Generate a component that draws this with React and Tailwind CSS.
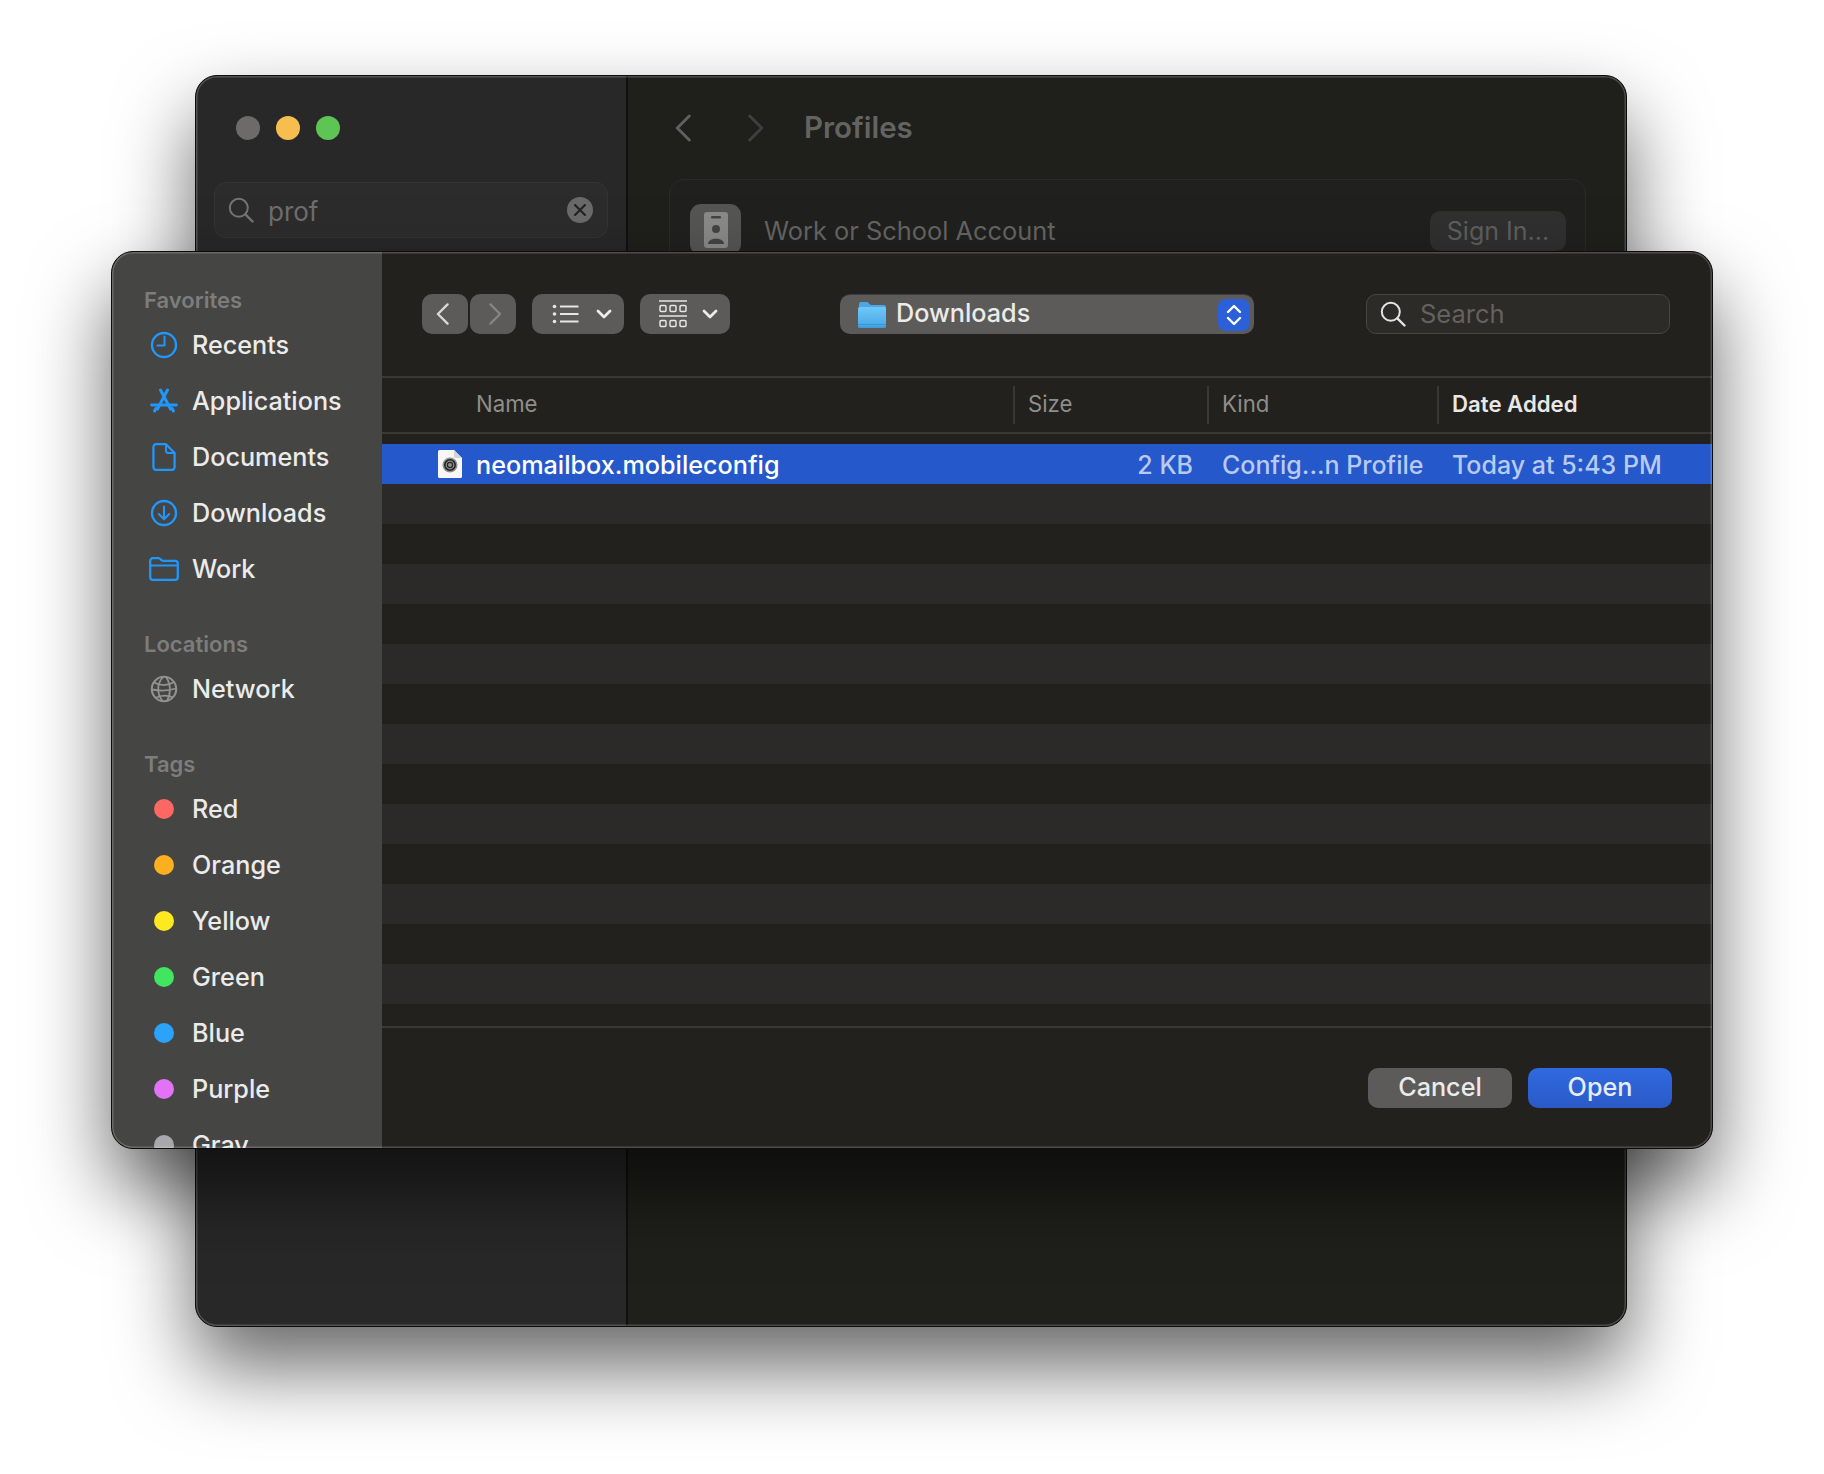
import React from "react";

const FONT = "font-['Inter','Liberation_Sans',sans-serif]";

const Chevron = ({ dir = "left", color = "#d9d9d7", w = 14, h = 24, sw = 2.4, className = "" }) => (
  <svg width={w} height={h} viewBox="0 0 14 24" fill="none" className={className}>
    <path d={dir === "left" ? "M12.5 1.5 L2 12 L12.5 22.5" : "M1.5 1.5 L12 12 L1.5 22.5"} stroke={color} strokeWidth={sw} strokeLinecap="round" strokeLinejoin="round" />
  </svg>
);

const Caret = () => (
  <svg width="16" height="10" viewBox="0 0 16 10" fill="none">
    <path d="M2 2 L8 8 L14 2" stroke="#ececeb" strokeWidth="2.8" strokeLinecap="round" strokeLinejoin="round" />
  </svg>
);

const SearchGlyph = ({ color, size = 26 }) => (
  <svg width={size} height={size} viewBox="0 0 26 26" fill="none">
    <circle cx="10.8" cy="10.8" r="9" stroke={color} strokeWidth="2" />
    <path d="M17.4 17.4 L24.5 24.5" stroke={color} strokeWidth="2.4" strokeLinecap="round" />
  </svg>
);

const BLUE = "#2196fb";

const Recents = () => (
  <svg width="28" height="28" viewBox="0 0 28 28" fill="none">
    <circle cx="14" cy="14" r="12" stroke={BLUE} strokeWidth="2.4" />
    <path d="M14.5 5.5 V14.5 H7.5" stroke={BLUE} strokeWidth="2" strokeLinecap="round" strokeLinejoin="round" />
  </svg>
);
const Apps = () => (
  <svg width="28" height="26" viewBox="0 0 28 26" fill="none">
    <path d="M10.5 2 L20.5 21" stroke={BLUE} strokeWidth="3" strokeLinecap="round" />
    <path d="M17.5 2 L7.5 21" stroke={BLUE} strokeWidth="3" strokeLinecap="round" />
    <path d="M1.5 17 H26.5" stroke={BLUE} strokeWidth="2.8" strokeLinecap="round" />
    <path d="M4.6 22.8 L6 20.5 M23.4 22.8 L22 20.5" stroke={BLUE} strokeWidth="3.2" strokeLinecap="round" />
  </svg>
);
const Docs = () => (
  <svg width="24" height="28" viewBox="0 0 24 28" fill="none">
    <path d="M5 1.2 H14 L22.6 10 V24 A3 3 0 0 1 19.6 27 H4.4 A3 3 0 0 1 1.4 24 V4.4 A3 3 0 0 1 5 1.2 Z" stroke={BLUE} strokeWidth="2.3" strokeLinejoin="round" />
    <path d="M14 1.5 V7.5 A2.5 2.5 0 0 0 16.5 10 H22.4" stroke={BLUE} strokeWidth="2" />
  </svg>
);
const Down = () => (
  <svg width="28" height="28" viewBox="0 0 28 28" fill="none">
    <circle cx="14" cy="14" r="12" stroke={BLUE} strokeWidth="2.4" />
    <path d="M14 7.5 V20 M8.8 15 L14 20.2 L19.2 15" stroke={BLUE} strokeWidth="2.1" strokeLinecap="round" strokeLinejoin="round" />
  </svg>
);
const FolderLine = () => (
  <svg width="30" height="24" viewBox="0 0 30 24" fill="none">
    <path d="M1.2 20 V3.8 A2.6 2.6 0 0 1 3.8 1.2 H9.8 C11.4 1.2 12 3.8 14 3.8 H26 A2.8 2.8 0 0 1 28.8 6.6 V20 A2.8 2.8 0 0 1 26 22.8 H4 A2.8 2.8 0 0 1 1.2 20 Z" stroke={BLUE} strokeWidth="2.3" />
    <path d="M1.2 8.5 H28.8" stroke={BLUE} strokeWidth="2" />
  </svg>
);
const Globe = () => (
  <svg width="28" height="28" viewBox="0 0 28 28" fill="none" stroke="#929291" strokeWidth="1.8">
    <circle cx="14" cy="14" r="12.2" strokeWidth="2.1" />
    <path d="M4 7.5 C10 11 18 11 24 7" />
    <path d="M1.8 14.5 C9 16 18 16 26 13.5" />
    <path d="M5 23 C11 20 18 20 23.5 22.5" />
    <path d="M13 2 C6.5 9 7 19 12.5 26" />
    <path d="M16 2 C21 9 21 19 17 26" />
  </svg>
);

const FileDoc = () => (
  <svg width="24" height="28" viewBox="0 0 24 28">
    <path d="M1.5 0 H16 L24 8 V26.5 A1.5 1.5 0 0 1 22.5 28 H1.5 A1.5 1.5 0 0 1 0 26.5 V1.5 A1.5 1.5 0 0 1 1.5 0 Z" fill="#f7f7f7" />
    <path d="M16 0 L24 8 H17.5 A1.5 1.5 0 0 1 16 6.5 Z" fill="#d4d4d4" />
    <circle cx="12" cy="15" r="7.5" fill="#8f8f8f" />
    <circle cx="12" cy="15" r="5.2" fill="none" stroke="#262626" strokeWidth="1.6" />
    <circle cx="12" cy="15" r="2.6" fill="none" stroke="#262626" strokeWidth="1.2" />
  </svg>
);

const BlueFolder = () => (
  <svg width="28" height="26" viewBox="0 0 28 26">
    <defs>
      <linearGradient id="fg" x1="0" y1="0" x2="0" y2="1">
        <stop offset="0" stopColor="#6fc8f7" />
        <stop offset="1" stopColor="#46a6e6" />
      </linearGradient>
    </defs>
    <path d="M1 6 V2 A2 2 0 0 1 3 0 H9 C11 0 11 3 13.5 3 H26 A2 2 0 0 1 28 5 V8 H0 Z" fill="#4aa8ea" />
    <rect x="0" y="5" width="28" height="21" rx="2" fill="url(#fg)" />
    <rect x="0" y="22" width="28" height="1" fill="#3a93d4" />
    <rect x="0" y="24.5" width="28" height="1" fill="#3a93d4" />
  </svg>
);

const Tool = ({ className = "", children }) => (
  <div className={`h-10 rounded-[10px] bg-[#5c5b59] flex items-center ${className}`}>{children}</div>
);

const Section = ({ label, className = "", gap, children }) => (
  <div className={className}>
    <div className={`h-6 -ml-px flex items-center text-[22px] font-semibold text-[#7d7d7c] ${gap}`}>{label}</div>
    {children}
  </div>
);

const Row = ({ icon, label }) => (
  <div className="h-14 flex items-center">
    <div className="w-[38px] flex items-center justify-center shrink-0">{icon}</div>
    <span className="ml-[9px] pt-[2px] text-[25.2px] font-[450] text-[#ebebea]">{label}</span>
  </div>
);

const Dot = ({ color }) => (
  <span className="block w-5 h-5 rounded-full" style={{ background: color }} />
);

const tags = [
  ["Red", "#fe6763"],
  ["Orange", "#fdaf1f"],
  ["Yellow", "#fde91f"],
  ["Green", "#41e55f"],
  ["Blue", "#2ba3fd"],
  ["Purple", "#e273f6"],
  ["Gray", "#a8a8ac"],
];

const Rim = () => (
  <div className="absolute inset-0 rounded-[21px] pointer-events-none shadow-[inset_0_0_0_1.5px_rgba(255,255,255,0.2)]" />
);

export default function App() {
  return (
    <div className={`relative w-[1824px] h-[1474px] bg-white overflow-hidden ${FONT}`}>
      {/* Back window */}
      <div className="absolute left-[195px] top-[75px] w-[1432px] h-[1252px] rounded-[22px] border border-[#0c0c0c] bg-[#1f1f1b] shadow-[0_40px_80px_rgba(0,0,0,0.6)]">
        <div className="relative h-full w-full flex overflow-hidden rounded-[21px]">
          <div className="w-[432px] h-full bg-[#282828] border-r-2 border-[#101010] shrink-0">
            <div className="flex gap-4 pl-10 pt-10">
              <span className="block w-6 h-6 rounded-full bg-[#6c6b6a]" />
              <span className="block w-6 h-6 rounded-full bg-[#f5be4f]" />
              <span className="block w-6 h-6 rounded-full bg-[#5ec454]" />
            </div>
            <div className="ml-[18px] mt-[42px] w-[394px] h-14 rounded-xl border border-[#343434] bg-[#2c2c2c] flex items-center pl-[13px] pr-[14px]">
              <SearchGlyph color="#757575" />
              <span className="ml-[14px] pt-[2px] text-[26px] text-[#6e6e6e]">prof</span>
              <span className="ml-auto w-[26px] h-[26px] rounded-full bg-[#6a6a6a] flex items-center justify-center">
                <svg width="12" height="12" viewBox="0 0 12 12" fill="none">
                  <path d="M1 1 L11 11 M11 1 L1 11" stroke="#242424" strokeWidth="2.2" strokeLinecap="round" />
                </svg>
              </span>
            </div>
          </div>
          <div className="flex-1 min-w-0">
            <div className="h-[103px] flex items-center pl-[47px]">
              <Chevron dir="left" color="#5f5f5d" w={16} h={28} sw={2.6} />
              <Chevron dir="right" color="#3f3f3d" w={16} h={28} sw={2.6} className="ml-[57px]" />
              <span className="ml-[40px] text-[29.5px] font-semibold text-[#636362]">Profiles</span>
            </div>
            <div className="ml-[41px] w-[917px] rounded-[14px] border border-[#2a2a28] bg-[#20201e] h-[200px] pt-[24px] pl-[20px] pr-[19px] flex items-start">
              <div className="w-[51px] h-[51px] rounded-[11px] bg-[#555554] flex items-center justify-center shrink-0">
                <svg width="24" height="36" viewBox="0 0 24 36">
                  <rect width="24" height="36" rx="3" fill="#8a8a89" />
                  <rect x="7" y="4" width="10" height="2.5" rx="1" fill="#444" />
                  <circle cx="12" cy="17" r="4" fill="#444" />
                  <path d="M4 32 C4 25 20 25 20 32 Z" fill="#444" />
                </svg>
              </div>
              <span className="ml-[23px] mt-[12px] text-[25.4px] leading-[30px] text-[#656564]">Work or School Account</span>
              <div className="ml-auto mt-[7px] pt-[2px] w-[136px] h-10 rounded-[10px] bg-[#303030] flex items-center justify-center text-[25px] text-[#5f5f5e]">Sign In...</div>
            </div>
          </div>
          <Rim />
        </div>
      </div>

      {/* Front window: open panel */}
      <div className="absolute left-[111px] top-[251px] w-[1602px] h-[898px] rounded-[22px] border border-[#0c0c0c] bg-[#22211d] shadow-[0_40px_80px_rgba(0,0,0,0.6)]">
        <div className="relative h-full w-full flex overflow-hidden rounded-[21px]">
          <aside className="w-[270px] h-full shrink-0 bg-[#454544] pl-[33px] pt-[36px] overflow-hidden">
            <Section label="Favorites" gap="mb-[5px]">
              <Row icon={<Recents />} label="Recents" />
              <Row icon={<Apps />} label="Applications" />
              <Row icon={<Docs />} label="Documents" />
              <Row icon={<Down />} label="Downloads" />
              <Row icon={<FolderLine />} label="Work" />
            </Section>
            <Section label="Locations" className="mt-[35px]" gap="mb-[5px]">
              <Row icon={<Globe />} label="Network" />
            </Section>
            <Section label="Tags" className="mt-[35px]" gap="mb-[5px]">
              {tags.map(([name, c]) => (
                <Row key={name} icon={<Dot color={c} />} label={name} />
              ))}
            </Section>
          </aside>

          <main className="flex-1 min-w-0 h-full flex flex-col">
            <div className="h-[124px] shrink-0 pt-[42px] pl-10 flex items-start">
              <Tool className="w-[46px] pl-[14px]"><Chevron dir="left" w={13} h={22} sw={2.5} /></Tool>
              <Tool className="w-[46px] pl-[19px] ml-[2px]"><Chevron dir="right" color="#868584" w={13} h={22} sw={2.5} /></Tool>
              <Tool className="w-[92px] ml-4 pl-[20px]">
                <svg width="28" height="20" viewBox="0 0 28 20" fill="none">
                  <g fill="#e6e6e5"><circle cx="2.5" cy="2.5" r="1.8" /><circle cx="2.5" cy="10" r="1.8" /><circle cx="2.5" cy="17.5" r="1.8" /></g>
                  <path d="M8 2.5 H26.5 M8 10 H26.5 M8 17.5 H26.5" stroke="#e6e6e5" strokeWidth="1.8" />
                </svg>
                <span className="ml-4"><Caret /></span>
              </Tool>
              <Tool className="w-[90px] ml-4 pl-[19px]">
                <svg width="28" height="28" viewBox="0 0 28 28" fill="none" stroke="#e6e6e5">
                  <path d="M0 1 H28 M0 16 H28" strokeWidth="1.6" />
                  <g strokeWidth="1.5">
                    <rect x="1" y="5.5" width="6" height="6" rx="1.2" /><rect x="11" y="5.5" width="6" height="6" rx="1.2" /><rect x="21" y="5.5" width="6" height="6" rx="1.2" />
                    <rect x="1" y="20.5" width="6" height="6" rx="1.2" /><rect x="11" y="20.5" width="6" height="6" rx="1.2" /><rect x="21" y="20.5" width="6" height="6" rx="1.2" />
                  </g>
                </svg>
                <span className="ml-[15px]"><Caret /></span>
              </Tool>
              <Tool className="w-[414px] ml-[110px] pl-[18px] pr-1 border-t border-[#3f3e3c]">
                <BlueFolder />
                <span className="ml-[10px] text-[25.2px] font-[450] leading-[30px] -mt-[4px] text-[#ebebea]">Downloads</span>
                <span className="ml-auto w-8 h-8 rounded-[8px] bg-[#2c60d8] flex items-center justify-center">
                  <svg width="16" height="24" viewBox="0 0 16 24" fill="none">
                    <path d="M2 9 L8 3 L14 9 M2 15 L8 21 L14 15" stroke="#fff" strokeWidth="2.4" strokeLinecap="round" strokeLinejoin="round" />
                  </svg>
                </span>
              </Tool>
              <div className="w-[304px] h-10 ml-[112px] rounded-[10px] border border-[#474643] bg-[#2c2b28] flex items-center pl-[13px]">
                <SearchGlyph color="#e3e3e2" />
                <span className="ml-[14px] text-[25.5px] text-[#636260]">Search</span>
              </div>
            </div>

            <div className="h-[58px] shrink-0 border-y-2 border-[#393835] grid grid-cols-[631px_194px_230px_1fr] items-center text-[22.2px] leading-[26px] text-[#8e8e8c]">
              <div className="pl-[94px] -mt-[2px]">Name</div>
              <div className="h-[38px] border-l-2 border-[#393835] pl-[13px] pb-[2px] flex items-center">Size</div>
              <div className="h-[38px] border-l-2 border-[#393835] pl-[13px] pb-[2px] flex items-center">Kind</div>
              <div className="h-[38px] border-l-2 border-[#393835] pl-[13px] pb-[2px] flex items-center font-semibold text-[#e8e8e7]">Date Added</div>
            </div>

            <div className="flex-1 min-h-0 overflow-hidden pt-[10px]">
              <div className="h-10 bg-[#2558cb] grid grid-cols-[631px_194px_230px_1fr] items-center text-[25px] font-[450] leading-[30px] text-[#b9caf1]">
                <div className="pl-[56px] flex items-center text-[25.2px] text-white">
                  <FileDoc />
                  <span className="ml-[14px] pt-[2px]">neomailbox.mobileconfig</span>
                </div>
                <div className="text-right pr-[14px] pt-[2px]">2 KB</div>
                <div className="pl-[15px] pt-[2px]">Config...n Profile</div>
                <div className="pl-[15px] pt-[2px]">Today at 5:43 PM</div>
              </div>
              {Array.from({ length: 14 }).map((_, i) => (
                <div key={i} className={`h-10 ${i % 2 === 0 ? "bg-[#2b2a28]" : "bg-[#22211d]"}`} />
              ))}
            </div>

            <div className="h-[122px] shrink-0 border-t-2 border-[#393835] flex items-center justify-end gap-4 pr-10">
              <div className="w-36 h-10 rounded-[10px] bg-[#5c5b59] flex items-center justify-center text-[25.2px] font-[450] leading-[30px] pb-[2px] text-[#ebebea]">Cancel</div>
              <div className="w-36 h-10 rounded-[10px] bg-gradient-to-b from-[#3069e0] to-[#2b5ac6] flex items-center justify-center text-[25.2px] font-[450] leading-[30px] pb-[2px] text-[#e6edfc]">Open</div>
            </div>
          </main>
          <Rim />
        </div>
      </div>
    </div>
  );
}
